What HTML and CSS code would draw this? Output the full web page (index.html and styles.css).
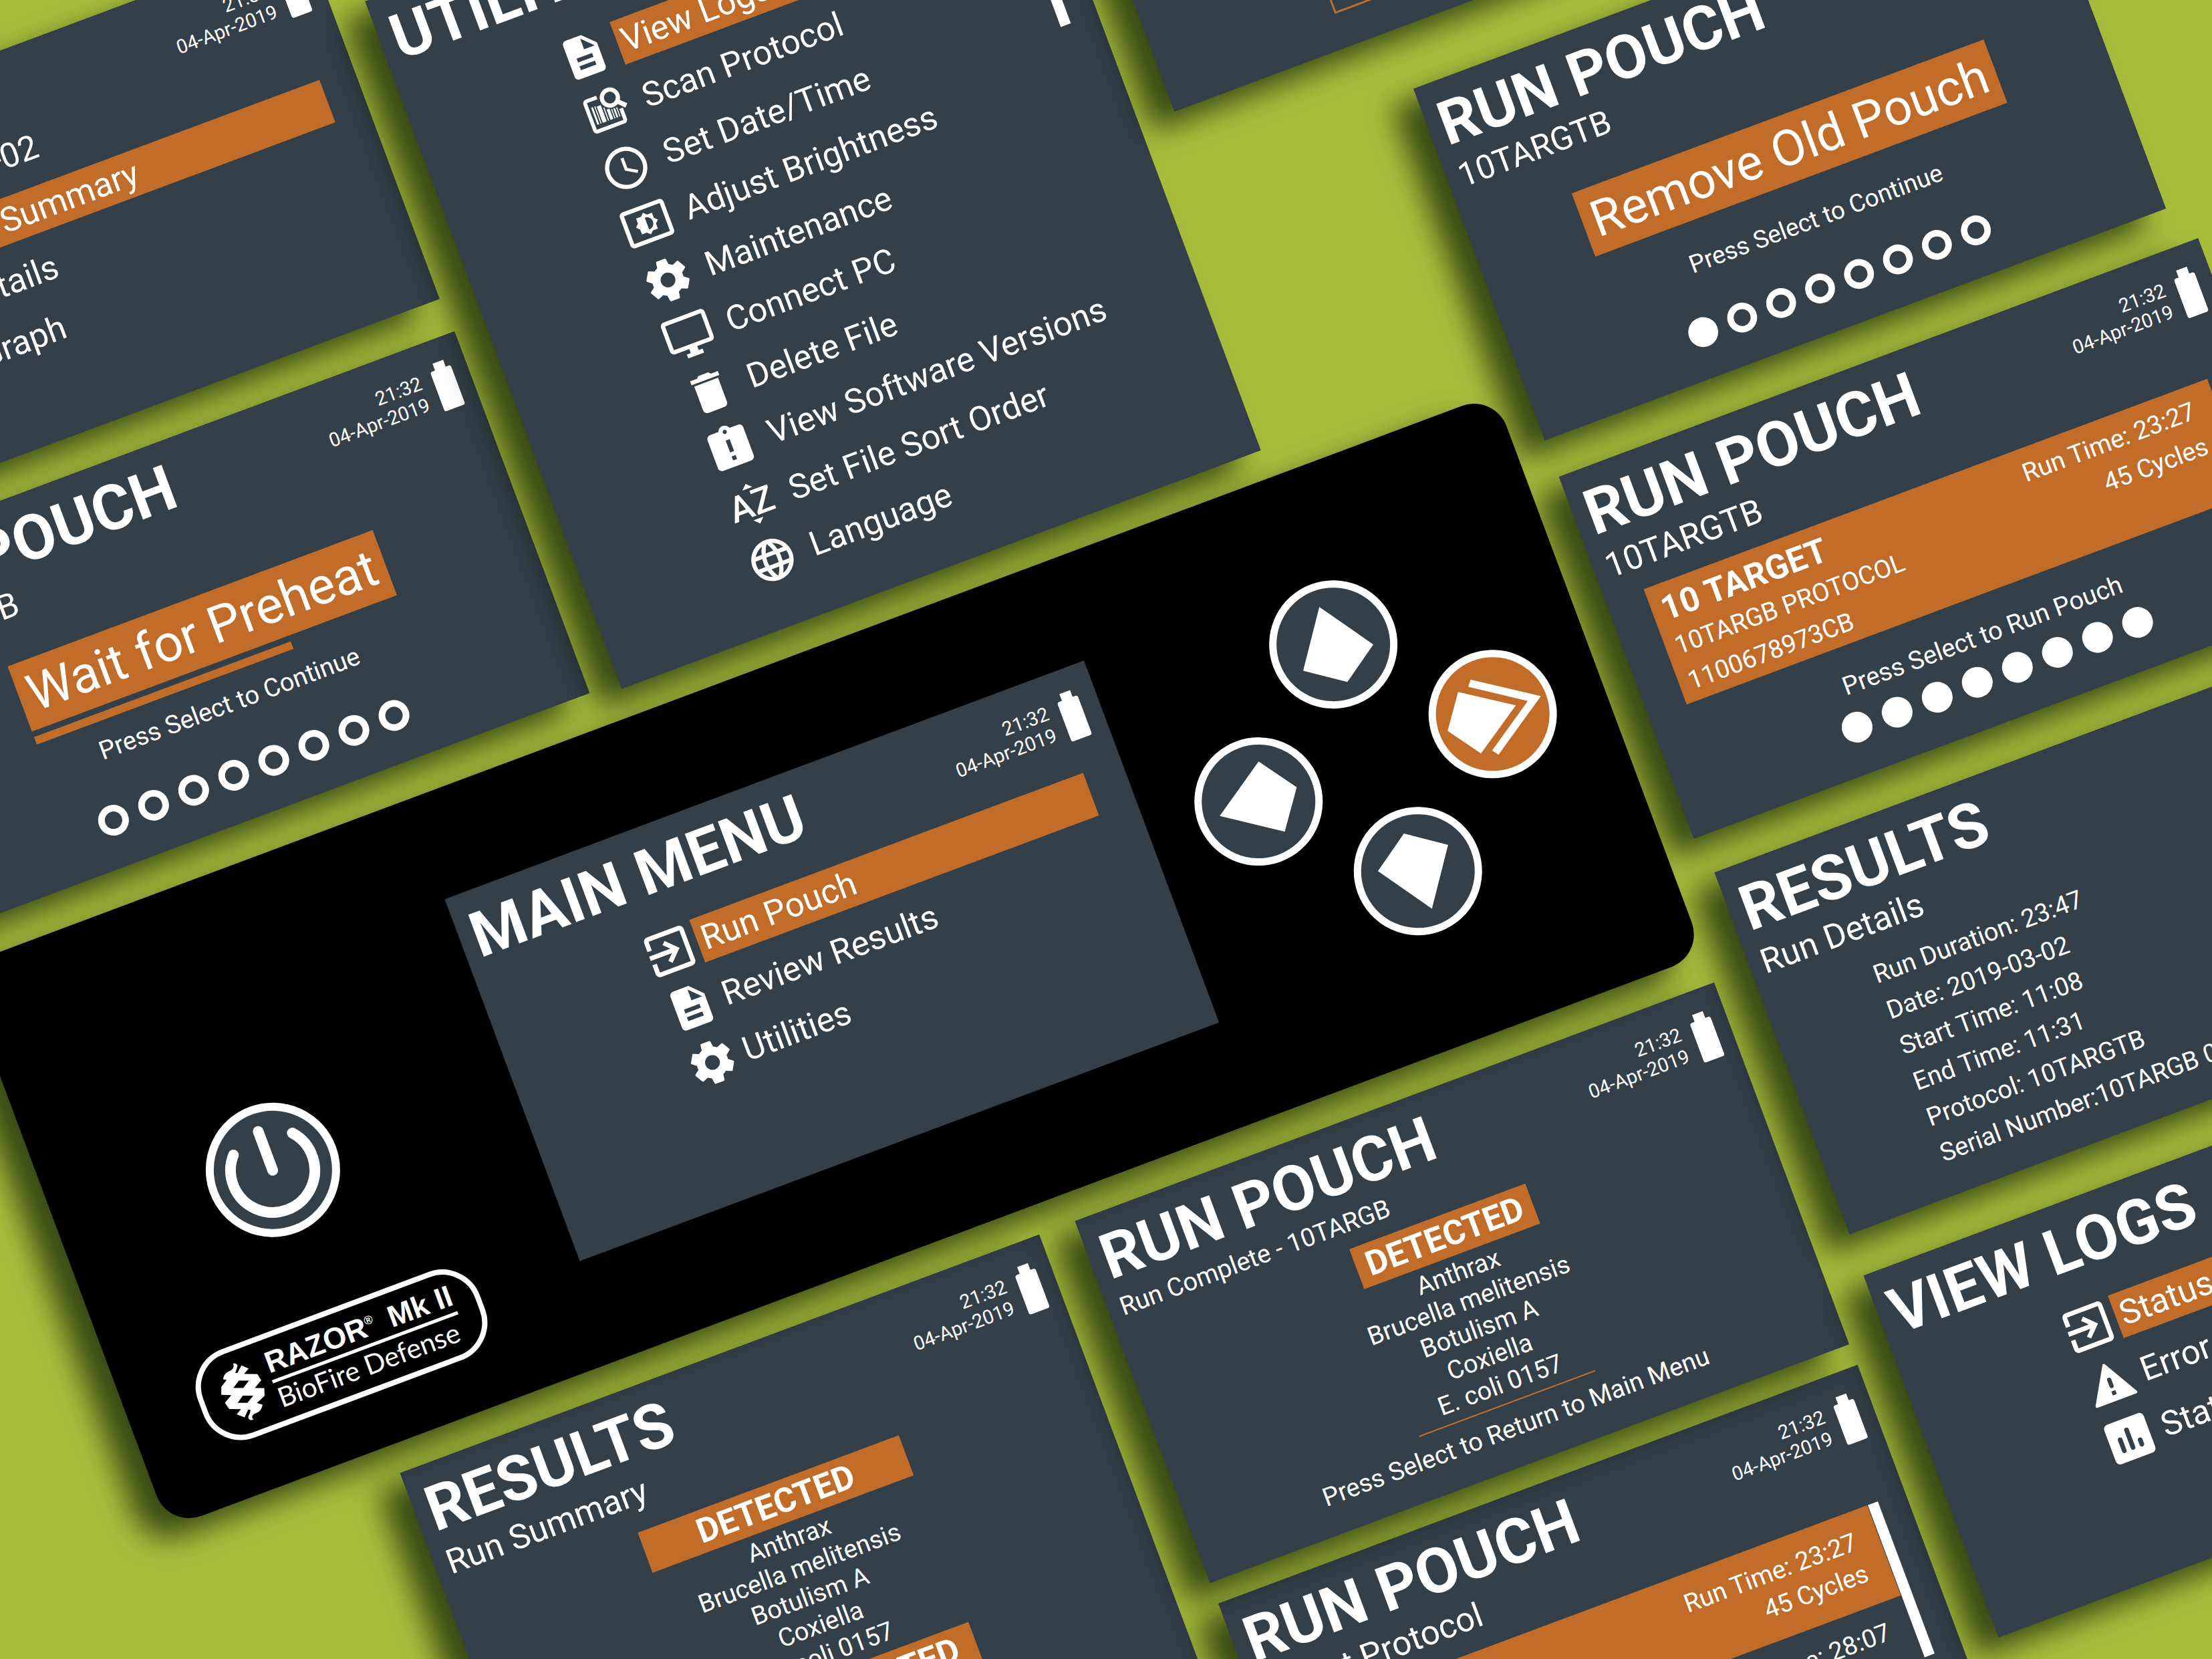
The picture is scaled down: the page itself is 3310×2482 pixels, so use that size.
FILE: index.html
```html
<!DOCTYPE html>
<html lang="en">
<head>
<meta charset="utf-8">
<meta name="viewport" content="width=device-width, initial-scale=1">
<title>RAZOR Mk II – Interface Screens</title>
<link rel="stylesheet" href="styles.css">
</head>
<body>

<svg class="sprite" aria-hidden="true">
  <symbol id="i-battery" viewBox="0 0 33 74"><path d="M8 0h17v11h4a4 4 0 0 1 4 4v55a4 4 0 0 1-4 4H4a4 4 0 0 1-4-4V15a4 4 0 0 1 4-4h4z"/></symbol>
  <symbol id="i-enter" viewBox="0 0 24 24"><path d="M10.09 15.59L11.5 17l5-5-5-5-1.41 1.41L12.67 11H3v2h9.67l-2.58 2.59zM19 3H5c-1.11 0-2 .9-2 2v4h2V5h14v14H5v-4H3v4c0 1.1.89 2 2 2h14c1.1 0 2-.9 2-2V5c0-1.1-.9-2-2-2z"/></symbol>
  <symbol id="i-doc" viewBox="0 0 24 24"><path d="M14 2H6c-1.1 0-1.99.9-1.99 2L4 20c0 1.1.89 2 1.99 2H18c1.1 0 2-.9 2-2V8l-6-6zm2 16H8v-2h8v2zm0-4H8v-2h8v2zm-3-5V3.5L18.5 9H13z"/></symbol>
  <symbol id="i-gear" viewBox="0 0 24 24"><path d="M19.43 12.98c.04-.32.07-.64.07-.98s-.03-.66-.07-.98l2.11-1.65c.19-.15.24-.42.12-.64l-2-3.46c-.12-.22-.39-.3-.61-.22l-2.49 1c-.52-.4-1.08-.73-1.69-.98l-.38-2.65C14.46 2.18 14.25 2 14 2h-4c-.25 0-.46.18-.49.42l-.38 2.65c-.61.25-1.17.59-1.69.98l-2.49-1c-.23-.09-.49 0-.61.22l-2 3.46c-.13.22-.07.49.12.64l2.11 1.65c-.04.32-.07.65-.07.98s.03.66.07.98l-2.11 1.65c-.19.15-.24.42-.12.64l2 3.46c.12.22.39.3.61.22l2.49-1c.52.4 1.08.73 1.69.98l.38 2.65c.03.24.24.42.49.42h4c.25 0 .46-.18.49-.42l.38-2.65c.61-.25 1.17-.59 1.69-.98l2.49 1c.23.09.49 0 .61-.22l2-3.46c.12-.22.07-.49-.12-.64l-2.11-1.65zM12 15.5c-1.93 0-3.5-1.57-3.5-3.5s1.57-3.5 3.5-3.5 3.5 1.57 3.5 3.5-1.57 3.5-3.5 3.5z"/></symbol>
  <symbol id="i-scan" viewBox="0 0 24 24"><path d="M10.6 4.4H5.4a1 1 0 0 0-1 1v13.2a1 1 0 0 0 1 1h13.2a1 1 0 0 0 1-1v-5.4" fill="none" stroke="currentColor" stroke-width="1.8"/><circle cx="16.4" cy="6.6" r="3.8" fill="none" stroke="currentColor" stroke-width="2"/><path d="M19 9.4l3.4 3.4" stroke="currentColor" stroke-width="2.2"/><path d="M6.4 8h.9v8.6h-.9zM8 8h.5v8.6H8zM9.1 8.4h2v8.2h-2zM11.8 10h.5v6.6h-.5zM13 11.4h1.4v5.2H13zM15 12h.5v4.6H15zM16.1 12h.8v4.6h-.8zM17.5 12h.5v4.6h-.5z"/></symbol>
  <symbol id="i-clock" viewBox="0 0 24 24"><path d="M11.99 2C6.47 2 2 6.48 2 12s4.47 10 9.99 10C17.52 22 22 17.52 22 12S17.52 2 11.99 2zM12 20c-4.42 0-8-3.58-8-8s3.58-8 8-8 8 3.58 8 8-3.58 8-8 8zm.5-13H11v6l5.25 3.15.75-1.23-4.5-2.67z"/></symbol>
  <symbol id="i-brightness" viewBox="0 0 24 24"><path d="M21 3H3c-1.1 0-2 .9-2 2v14c0 1.1.9 2 2 2h18c1.1 0 2-.9 2-2V5c0-1.1-.9-2-2-2zm0 16.01H3V4.99h18v14.02zM8 16h2.5l1.5 1.5 1.5-1.5H16v-2.5l1.5-1.5-1.5-1.5V8h-2.5L12 6.5 10.5 8H8v2.5L6.5 12 8 13.5V16zm4-7c1.66 0 3 1.34 3 3s-1.34 3-3 3V9z"/></symbol>
  <symbol id="i-monitor" viewBox="0 0 24 24"><path d="M21 2H3c-1.1 0-2 .9-2 2v12c0 1.1.9 2 2 2h7v2H8v2h8v-2h-2v-2h7c1.1 0 2-.9 2-2V4c0-1.1-.9-2-2-2zm0 14H3V4h18v12z"/></symbol>
  <symbol id="i-trash" viewBox="0 0 24 24"><path d="M6 19c0 1.1.9 2 2 2h8c1.1 0 2-.9 2-2V7H6v12zM19 4h-3.5l-1-1h-5l-1 1H5v2h14V4z"/></symbol>
  <symbol id="i-clipboard" viewBox="0 0 24 24"><path d="M19 3h-4.18C14.4 1.84 13.3 1 12 1c-1.3 0-2.4.84-2.82 2H5c-1.1 0-2 .9-2 2v14c0 1.1.9 2 2 2h14c1.1 0 2-.9 2-2V5c0-1.1-.9-2-2-2zm-6 15h-2v-2h2v2zm0-4h-2V8h2v6zm-1-9c-.55 0-1-.45-1-1s.45-1 1-1 1 .45 1 1-.45 1-1 1z"/></symbol>
  <symbol id="i-sort" viewBox="0 0 24 24"><path d="M12.6 2l2.5 2.5h-5zM12.6 22l2.5-2.5h-5z"/><text x="12" y="17.8" text-anchor="middle" font-family="Roboto, sans-serif" font-size="17" font-weight="500">AZ</text></symbol>
  <symbol id="i-globe" viewBox="0 0 24 24"><path d="M11.99 2C6.47 2 2 6.48 2 12s4.47 10 9.99 10C17.52 22 22 17.52 22 12S17.52 2 11.99 2zm6.93 6h-2.95c-.32-1.25-.78-2.45-1.38-3.56 1.84.63 3.37 1.91 4.33 3.56zM12 4.04c.83 1.2 1.48 2.53 1.91 3.96h-3.82c.43-1.43 1.08-2.76 1.91-3.96zM4.26 14C4.1 13.36 4 12.69 4 12s.1-1.36.26-2h3.38c-.08.66-.14 1.32-.14 2 0 .68.06 1.34.14 2H4.26zm.82 2h2.95c.32 1.25.78 2.45 1.38 3.56-1.84-.63-3.37-1.9-4.33-3.56zm2.95-8H5.08c.96-1.66 2.49-2.93 4.33-3.56C8.81 5.55 8.35 6.75 8.03 8zM12 19.96c-.83-1.2-1.48-2.53-1.91-3.96h3.82c-.43 1.43-1.08 2.76-1.91 3.96zM14.34 14H9.66c-.09-.66-.16-1.32-.16-2 0-.68.07-1.35.16-2h4.68c.09.65.16 1.32.16 2 0 .68-.07 1.34-.16 2zm.25 5.56c.6-1.11 1.06-2.31 1.38-3.56h2.95c-.96 1.65-2.49 2.93-4.33 3.56zM16.36 14c.08-.66.14-1.32.14-2 0-.68-.06-1.34-.14-2h3.38c.16.64.26 1.31.26 2s-.1 1.36-.26 2h-3.38z"/></symbol>
  <symbol id="i-warning" viewBox="0 0 24 24"><path d="M2.2 20.4h19.6L12 3.4z" stroke="currentColor" stroke-width="1.4" stroke-linejoin="round"/><path d="M12 10.6v3.2" stroke="#333f49" stroke-width="2" stroke-linecap="round"/><path d="M11 16.2h2v2h-2z" fill="#333f49"/></symbol>
  <symbol id="i-chart" viewBox="0 0 24 24"><rect x="3" y="3" width="18" height="18" rx="2"/><path d="M8 11v5M12 8v8M16 14v2" stroke="#333f49" stroke-width="2" stroke-linecap="round"/></symbol>
</svg>

<main class="board">

  <section class="screen screen--results-menu">
    <header class="bar bar--inset">
      <div><h2 class="title">RESULTS</h2><p class="subtitle">10TARGTB 2019-03-02</p></div>
      <div class="status"><p class="clock"><time>21:32</time><time>04-Apr-2019</time></p><svg class="battery"><use href="#i-battery"/></svg></div>
    </header>
    <nav class="pane pane--low">
      <ul class="menu">
        <li><a class="item item--on" href="#summary"><span class="icon"></span><span class="label">Run Summary</span></a></li>
        <li><a class="item" href="#details"><span class="icon"></span><span class="label">Details</span></a></li>
        <li><a class="item" href="#graph"><span class="icon"></span><span class="label">Graph</span></a></li>
      </ul>
    </nav>
  </section>

  <section class="screen screen--preheat">
    <header class="bar">
      <div><h2 class="title">RUN POUCH</h2><p class="subtitle">10TARGTB</p></div>
      <div class="status"><p class="clock"><time>21:32</time><time>04-Apr-2019</time></p><svg class="battery"><use href="#i-battery"/></svg></div>
    </header>
    <div class="prompt">
      <div class="prompt-box">
        <p class="prompt-text">Wait for Preheat</p>
        <div class="prompt-progress"><div class="progress" role="progressbar" aria-label="Preheat" aria-valuenow="70" style="width:410px"></div></div>
      </div>
      <p class="note">Press Select to Continue</p>
      <ol class="dots"><li></li><li></li><li></li><li></li><li></li><li></li><li></li><li></li></ol>
    </div>
  </section>

  <section class="screen screen--utilities">
    <header class="bar">
      <div><h2 class="title">UTILITIES</h2></div>
      <div class="status"><p class="clock"><time>21:32</time><time>04-Apr-2019</time></p><svg class="battery"><use href="#i-battery"/></svg></div>
    </header>
    <nav class="pane pane--scroll">
      <ul class="menu menu--long">
        <li><a class="item item--on" href="#logs"><span class="icon icon--small"><svg><use href="#i-doc"/></svg></span><span class="label">View Logs</span></a></li>
        <li><a class="item" href="#scan"><span class="icon"><svg><use href="#i-scan"/></svg></span><span class="label">Scan Protocol</span></a></li>
        <li><a class="item" href="#date"><span class="icon"><svg><use href="#i-clock"/></svg></span><span class="label">Set Date/Time</span></a></li>
        <li><a class="item" href="#brightness"><span class="icon"><svg><use href="#i-brightness"/></svg></span><span class="label">Adjust Brightness</span></a></li>
        <li><a class="item" href="#maintenance"><span class="icon"><svg><use href="#i-gear"/></svg></span><span class="label">Maintenance</span></a></li>
        <li><a class="item" href="#connect"><span class="icon"><svg><use href="#i-monitor"/></svg></span><span class="label">Connect PC</span></a></li>
        <li><a class="item" href="#delete"><span class="icon"><svg><use href="#i-trash"/></svg></span><span class="label">Delete File</span></a></li>
        <li><a class="item" href="#versions"><span class="icon"><svg><use href="#i-clipboard"/></svg></span><span class="label">View Software Versions</span></a></li>
        <li><a class="item" href="#sort"><span class="icon"><svg><use href="#i-sort"/></svg></span><span class="label">Set File Sort Order</span></a></li>
        <li><a class="item" href="#language"><span class="icon"><svg><use href="#i-globe"/></svg></span><span class="label">Language</span></a></li>
      </ul>
      <div class="thumb"></div>
    </nav>
  </section>

  <section class="screen screen--entry">
    <div class="field"></div>
  </section>

  <section class="screen screen--summary">
    <header class="bar">
      <div><h2 class="title">RESULTS</h2><p class="subtitle">Run Summary</p></div>
      <div class="status"><p class="clock"><time>21:32</time><time>04-Apr-2019</time></p><svg class="battery"><use href="#i-battery"/></svg></div>
    </header>
    <div class="findings findings--wide">
      <h3 class="verdict">DETECTED</h3>
      <ul class="agents"><li>Anthrax</li><li>Brucella melitensis</li><li>Botulism A</li><li>Coxiella</li><li>E. coli 0157</li></ul>
      <h3 class="verdict">NOT DETECTED</h3>
    </div>
  </section>

  <section class="screen screen--protocols">
    <header class="bar">
      <div><h2 class="title">RUN POUCH</h2><p class="subtitle">Select Protocol</p></div>
      <div class="status"><p class="clock"><time>21:32</time><time>04-Apr-2019</time></p><svg class="battery"><use href="#i-battery"/></svg></div>
    </header>
    <div class="protocols">
      <div class="protocol-list">
        <div class="card card--on card--short"><p class="card-side">Run Time: 23:27<br>45 Cycles</p></div>
        <div class="card card--short"><p class="card-side">Run Time: 28:07<br>45 Cycles</p></div>
      </div>
      <div class="thumb"></div>
    </div>
  </section>

  <section class="screen screen--complete">
    <header class="bar">
      <div><h2 class="title">RUN POUCH</h2><p class="subtitle subtitle--small">Run Complete - 10TARGB</p></div>
      <div class="status"><p class="clock"><time>21:32</time><time>04-Apr-2019</time></p><svg class="battery"><use href="#i-battery"/></svg></div>
    </header>
    <div class="findings">
      <h3 class="verdict">DETECTED</h3>
      <ul class="agents agents--ruled"><li>Anthrax</li><li>Brucella melitensis</li><li>Botulism A</li><li>Coxiella</li><li>E. coli 0157</li></ul>
      <p class="note">Press Select to Return to Main Menu</p>
    </div>
  </section>

  <section class="screen screen--details">
    <header class="bar">
      <div><h2 class="title">RESULTS</h2><p class="subtitle">Run Details</p></div>
    </header>
    <ul class="facts">
      <li>Run Duration: 23:47</li>
      <li>Date: 2019-03-02</li>
      <li>Start Time: 11:08</li>
      <li>End Time: 11:31</li>
      <li>Protocol: 10TARGTB</li>
      <li>Serial Number:10TARGB 0157</li>
    </ul>
  </section>

  <section class="screen screen--target">
    <header class="bar">
      <div><h2 class="title">RUN POUCH</h2><p class="subtitle">10TARGTB</p></div>
      <div class="status"><p class="clock"><time>21:32</time><time>04-Apr-2019</time></p><svg class="battery"><use href="#i-battery"/></svg></div>
    </header>
    <div class="protocols">
      <div class="card card--on">
        <div class="card-main"><h3 class="card-title">10 TARGET</h3><p>10TARGB PROTOCOL<br>1100678973CB</p></div>
        <p class="card-side">Run Time: 23:27<br>45 Cycles</p>
      </div>
    </div>
    <p class="note note--run">Press Select to Run Pouch</p>
    <ol class="dots dots--near"><li class="done"></li><li class="done"></li><li class="done"></li><li class="done"></li><li class="done"></li><li class="done"></li><li class="done"></li><li class="done"></li></ol>
  </section>

  <section class="screen screen--remove">
    <header class="bar">
      <div><h2 class="title">RUN POUCH</h2><p class="subtitle">10TARGTB</p></div>
    </header>
    <div class="prompt">
      <div class="prompt-box">
        <p class="prompt-text">Remove Old Pouch</p>
        <div class="prompt-progress"></div>
      </div>
      <p class="note">Press Select to Continue</p>
      <ol class="dots"><li class="done"></li><li></li><li></li><li></li><li></li><li></li><li></li><li></li></ol>
    </div>
  </section>

  <section class="screen screen--logs">
    <header class="bar">
      <div><h2 class="title">VIEW LOGS</h2></div>
    </header>
    <nav class="pane">
      <ul class="menu">
        <li><a class="item item--on" href="#status-log"><span class="icon icon--large"><svg><use href="#i-enter"/></svg></span><span class="label">Status Log</span></a></li>
        <li><a class="item" href="#error-log"><span class="icon"><svg><use href="#i-warning"/></svg></span><span class="label">Error Log</span></a></li>
        <li><a class="item" href="#statistics"><span class="icon icon--large"><svg><use href="#i-chart"/></svg></span><span class="label">Statistics</span></a></li>
      </ul>
    </nav>
  </section>

  <section class="device">
    <div class="device-side">
      <button class="power" type="button" aria-label="Power">
        <svg viewBox="-100 -100 200 200"><path d="M-47-42A63 63 0 1 0 47-42M0-62V0" fill="none" stroke="#fff" stroke-width="16" stroke-linecap="round"/></svg>
      </button>
      <div class="badge">
        <svg class="helix" viewBox="307 1145 235 235" aria-hidden="true"><path transform="rotate(20.47 425 1262)" fill-rule="evenodd" d="M385 1150C398 1151 408 1156 403 1166C399 1174 401 1180 395 1188L404 1188L420 1159L448 1171L430 1192L482 1193L497 1217L472 1247L509 1248L510 1278L480 1306L502 1312C499 1335 486 1342 472 1347C460 1354 458 1364 468 1370C454 1377 444 1368 447 1358C450 1350 456 1344 454 1332L446 1332L432 1362L401 1350L418 1330L372 1329L355 1305L380 1275L341 1274L341 1243L362 1216L348 1213C352 1192 362 1185 376 1180C390 1173 393 1160 385 1150ZM410 1218L449 1218L427 1247L388 1247ZM425 1277L466 1277L443 1305L405 1305Z"/></svg>
        <div class="badge-text">
          <p class="brand"><span>RAZOR<sup>®</sup></span><span>Mk II</span></p>
          <p class="maker">BioFire Defense</p>
        </div>
      </div>
    </div>

    <section class="screen screen--main">
      <header class="bar bar--inset">
        <div><h1 class="title">MAIN MENU</h1></div>
        <div class="status"><p class="clock"><time>21:32</time><time>04-Apr-2019</time></p><svg class="battery"><use href="#i-battery"/></svg></div>
      </header>
      <nav class="pane">
        <ul class="menu">
          <li><a class="item item--on" href="#run"><span class="icon icon--large"><svg><use href="#i-enter"/></svg></span><span class="label">Run Pouch</span></a></li>
          <li><a class="item" href="#review"><span class="icon icon--small"><svg><use href="#i-doc"/></svg></span><span class="label">Review Results</span></a></li>
          <li><a class="item" href="#utilities"><span class="icon"><svg><use href="#i-gear"/></svg></span><span class="label">Utilities</span></a></li>
        </ul>
      </nav>
    </section>

    <div class="keys">
      <button class="key key--up" type="button" aria-label="Up"><svg viewBox="-96 -96 192 192"><path d="M0-60L56 21L0 60L-56 21Z"/></svg></button>
      <button class="key key--left" type="button" aria-label="Back"><svg viewBox="-96 -96 192 192"><path d="M-62 0L21-56L61 0L21 56Z"/></svg></button>
      <button class="key key--select" type="button" aria-label="Select"><svg viewBox="-96 -96 192 192"><path d="M37 0L-37 49L-72 0L-37-49ZM-13-60L77 0L-13 60L-20 51L56 0L-20-51Z"/></svg></button>
      <button class="key key--down" type="button" aria-label="Down"><svg viewBox="-96 -96 192 192"><path d="M0 60L-56-21L0-60L56-21Z"/></svg></button>
    </div>
  </section>

</main>
</body>
</html>
```
FILE: styles.css
```css
:root {
  --lime: #a9bd3c;
  --slate: #333f49;
  --orange: #c16c29;
  --shadow: -40px 16px 44px rgba(4, 20, 0, .68);
}

* { box-sizing: border-box; }

body {
  margin: 0;
  min-height: 100vh;
  overflow: hidden;
  background: var(--lime);
  color: #fff;
  font-family: Roboto, "Liberation Sans", sans-serif;
  font-size: 38px;
  line-height: 48px;
}

h1, h2, h3, p, ul, ol { margin: 0; padding: 0; }
ul, ol { list-style: none; }
svg { display: block; fill: currentColor; }
button { margin: 0; padding: 0; font: inherit; color: inherit; cursor: pointer; }
.sprite { position: absolute; width: 0; height: 0; }

/* Tilted canvas the screens are pinned to */
.board {
  position: absolute;
  inset: 0;
  transform: rotate(-20.47deg);
  transform-origin: 0 0;
}

.screen {
  position: absolute;
  width: 1021px;
  height: 578px;
  overflow: hidden;
  background: var(--slate);
  box-shadow: var(--shadow);
  white-space: nowrap;
}
.screen--results-menu { left: -561px; top: 71px; }
.screen--preheat { left: -557px; top: 702px; }
.screen--utilities { left: 511px; top: 193px; height: 1098px; }
.screen--entry { left: 1588px; top: 193px; }
.screen--summary { left: -210px; top: 2274px; height: 1098px; }
.screen--complete { left: 868px; top: 2274px; }
.screen--protocols { left: 869px; top: 2885px; }
.screen--details { left: 1947px; top: 2120px; }
.screen--target { left: 1936px; top: 1484px; }
.screen--remove { left: 1935px; top: 864px; scale: .972; transform-origin: 0 0; }
.screen--logs { left: 1945px; top: 2763px; }
.screen--main { position: relative; flex: none; box-shadow: none; }

/* Header */
.bar {
  display: flex;
  justify-content: space-between;
  align-items: flex-start;
  padding: 20px 23px 0 19px;
}
.bar--inset { padding-right: 27px; }
.title { font-size: 94px; line-height: 99px; font-weight: 700; }
.subtitle { font-size: 51px; line-height: 65px; }
.subtitle--small { font-size: 38px; line-height: 53px; }
.status { display: flex; gap: 18px; padding-top: 14px; height: 100px; }
.clock {
  display: flex;
  flex-direction: column;
  align-items: flex-end;
  padding-top: 4px;
  font-size: 29px;
  line-height: 34px;
}
.battery { width: 33px; height: 74px; }

/* Menus */
.pane { padding: 37px 60px 0 248px; }
.pane--low { padding: 24px 54px 0 254px; }
.pane--scroll { display: flex; gap: 1px; padding-right: 43px; }
.menu { display: flex; flex-direction: column; flex: 1; gap: 21px; }
.menu--long { justify-content: space-between; gap: 0; height: 873px; }
.item {
  display: flex;
  height: 68px;
  color: inherit;
  font-size: 51px;
  line-height: 67px;
  text-decoration: none;
}
.icon { display: flex; align-items: center; justify-content: center; flex: none; width: 84px; }
.icon svg { flex: none; width: 76px; height: 76px; }
.icon--small svg { width: 74px; height: 74px; }
.icon--large { padding-right: 4px; }
.icon--large svg { width: 84px; height: 84px; }
.menu--long .icon { padding-right: 22px; }
.label { flex: 1; padding-left: 8px; }
.item--on .label { background: var(--orange); }
.thumb { flex: none; width: 16px; height: 243px; background: #fff; }

/* Prompts */
.prompt { display: flex; flex-direction: column; align-items: center; padding-top: 52px; }
.prompt-text {
  padding: 0 15px;
  background: var(--orange);
  font-size: 77px;
  line-height: 104px;
}
.prompt-progress { height: 40px; padding-top: 9px; }
.progress { height: 12px; background: var(--orange); }
.note { text-align: center; }
.note--run { padding-top: 34px; }
.dots { display: flex; justify-content: center; gap: 18px; padding-top: 56px; }
.dots--near { padding-top: 16px; }
.dots li { width: 46px; height: 46px; border: 10px solid #fff; border-radius: 50%; }
.dots .done { background: #fff; }

/* Protocol cards */
.protocols { display: flex; gap: 1px; padding: 18px 43px 0 60px; }
.protocol-list { flex: 1; }
.card {
  display: flex;
  justify-content: space-between;
  flex: 1;
  height: 184px;
  padding: 9px 35px 0 15px;
  line-height: 56px;
}
.screen--target .protocols { padding-right: 61px; }
.card--on { background: var(--orange); }
.card--short { justify-content: flex-end; height: 144px; line-height: 50px; padding-top: 19px; }
.card-title { font-size: 51px; line-height: 60px; font-weight: 700; }
.card-side { text-align: right; }

/* Results */
.findings { display: flex; flex-direction: column; align-items: center; padding-top: 11px; }
.findings--wide { padding-top: 24px; }
.verdict {
  width: 281px;
  background: var(--orange);
  font-size: 51px;
  line-height: 64px;
  font-weight: 700;
  text-align: center;
}
.findings--wide .verdict { width: 417px; }
.agents { width: 281px; padding: 3px 0 6px; line-height: 45px; text-align: center; }
.agents li { display: flex; justify-content: center; }
.agents--ruled { margin-bottom: 12px; border-bottom: 2px solid var(--orange); }
.facts { padding: 16px 0 0 170px; line-height: 57px; }

.field { width: 470px; height: 68px; margin: 457px 0 0 276px; border: 3px solid var(--orange); }

/* Hardware unit */
.device {
  position: absolute;
  left: -563px;
  top: 1334px;
  display: flex;
  align-items: center;
  width: 2452px;
  height: 896px;
  padding-right: 77px;
  border-radius: 52px;
  background: #000;
  box-shadow: var(--shadow);
}
.device-side {
  display: flex;
  flex-direction: column;
  align-items: center;
  flex: none;
  width: 666px;
  height: 896px;
  margin-right: 50px;
  padding-top: 348px;
}
.power {
  width: 201px;
  height: 201px;
  border: 12px solid #fff;
  border-radius: 50%;
  background: var(--slate);
}
.power svg { width: 200px; height: 200px; margin: -12px; }
.badge {
  display: flex;
  align-items: center;
  width: 450px;
  height: 141px;
  margin-top: 124px;
  padding-left: 14px;
  border: 8px solid #fff;
  border-radius: 60px;
}
.helix { flex: none; width: 90px; height: 90px; }
.badge-text { width: 296px; margin-left: 2px; }
.brand {
  display: flex;
  justify-content: space-between;
  border-bottom: 5px solid #fff;
  font: bold 45px/52px "Liberation Sans", Arial, sans-serif;
}
.brand sup { font-size: 18px; line-height: 18px; vertical-align: 17px; }
.maker { font: 400 41px/48px Lato, sans-serif; }

.keys {
  display: grid;
  grid-template: repeat(3, 181px) / repeat(3, 187px);
  place-items: center;
  margin-left: auto;
}
.key {
  width: 192px;
  height: 192px;
  border: 11px solid #fff;
  border-radius: 50%;
  background: var(--slate);
}
.key svg { width: 192px; height: 192px; margin: -11px; }
.key--up { grid-area: 1 / 2; }
.key--left { grid-area: 2 / 1; }
.key--select { grid-area: 2 / 3; background: var(--orange); }
.key--down { grid-area: 3 / 2; }
```
